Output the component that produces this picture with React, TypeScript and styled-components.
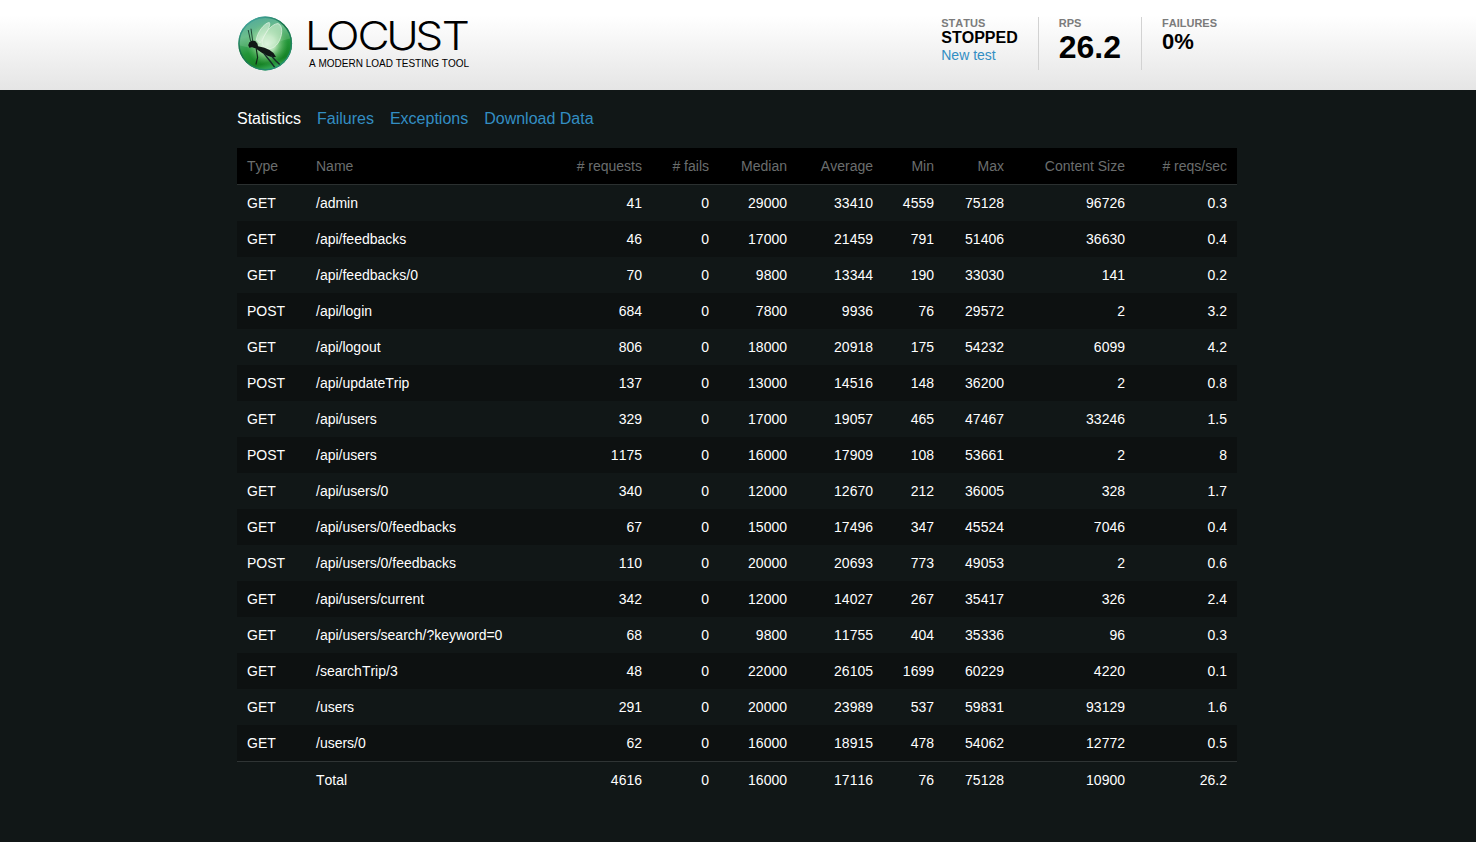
import React from "react";
import styled, { createGlobalStyle } from "styled-components";

const GlobalStyle = createGlobalStyle`
  * { box-sizing: border-box; }
  body {
    margin: 0;
    min-height: 100vh;
    background: #111717;
    color: #fff;
    font-family: "Liberation Sans", Arial, Helvetica, sans-serif;
    font-size: 14px;
    font-kerning: none;
  }
`;

const TopBar = styled.header`
  height: 90px;
  background: linear-gradient(#ffffff 0%, #ffffff 17%, #e5e5e5 100%);
`;

const Container = styled.div`
  width: 1002px;
  margin: 0 auto;
  padding-right: 2px;
`;

const TopContent = styled(Container)`
  display: flex;
  justify-content: space-between;
`;

const Logo = styled.svg`
  display: block;
  width: 240px;
  height: 80px;
`;

const Stats = styled.div`
  display: flex;
  height: 53px;
  margin-top: 17px;
`;

const StatBox = styled.div`
  padding: 0 20px;
  color: #000;
  border-right: 1px solid #d2d2d2;
  &:last-child { border-right: 0; }
`;

const StatLabel = styled.div`
  font-size: 11px;
  font-weight: bold;
  line-height: 13px;
  color: #7b7b7b;
`;

const StatValue = styled.div<{ $size: number; $line: number }>`
  font-size: ${(p) => p.$size}px;
  line-height: ${(p) => p.$line}px;
  font-weight: bold;
`;

const NewTest = styled.a`
  display: block;
  line-height: 18px;
  color: #338ec3;
`;

const Tabs = styled.nav`
  display: flex;
  gap: 16px;
  padding: 19px 0 20px;
  font-size: 16px;
  line-height: 19px;
`;

const Tab = styled.a<{ $active?: boolean }>`
  color: ${(p) => (p.$active ? "#fff" : "#338ec3")};
`;

const Table = styled.table`
  width: 1000px;
  table-layout: fixed;
  border-collapse: separate;
  border-spacing: 0;
`;

const HeadCell = styled.th<{ $left?: boolean }>`
  height: 37px;
  padding: 0 10px;
  background: #000;
  border-bottom: 1px solid #2b3030;
  color: #6b6e6e;
  font-weight: normal;
  text-align: ${(p) => (p.$left ? "left" : "right")};
`;

const Row = styled.tr<{ $dark?: boolean }>`
  background: ${(p) => (p.$dark ? "#0d1111" : "transparent")};
`;

const Cell = styled.td<{ $left?: boolean; $total?: boolean }>`
  height: ${(p) => (p.$total ? 37 : 36)}px;
  padding: 0 10px;
  border-top: ${(p) => (p.$total ? "1px solid #2f3434" : "0")};
  text-align: ${(p) => (p.$left ? "left" : "right")};
`;

const widths = [69, 240, 106, 67, 78, 86, 61, 70, 121, 102];
const columns = ["Type", "Name", "# requests", "# fails", "Median", "Average", "Min", "Max", "Content Size", "# reqs/sec"];
const rows = [
  ["GET", "/admin", 41, 0, 29000, 33410, 4559, 75128, 96726, 0.3],
  ["GET", "/api/feedbacks", 46, 0, 17000, 21459, 791, 51406, 36630, 0.4],
  ["GET", "/api/feedbacks/0", 70, 0, 9800, 13344, 190, 33030, 141, 0.2],
  ["POST", "/api/login", 684, 0, 7800, 9936, 76, 29572, 2, 3.2],
  ["GET", "/api/logout", 806, 0, 18000, 20918, 175, 54232, 6099, 4.2],
  ["POST", "/api/updateTrip", 137, 0, 13000, 14516, 148, 36200, 2, 0.8],
  ["GET", "/api/users", 329, 0, 17000, 19057, 465, 47467, 33246, 1.5],
  ["POST", "/api/users", 1175, 0, 16000, 17909, 108, 53661, 2, 8],
  ["GET", "/api/users/0", 340, 0, 12000, 12670, 212, 36005, 328, 1.7],
  ["GET", "/api/users/0/feedbacks", 67, 0, 15000, 17496, 347, 45524, 7046, 0.4],
  ["POST", "/api/users/0/feedbacks", 110, 0, 20000, 20693, 773, 49053, 2, 0.6],
  ["GET", "/api/users/current", 342, 0, 12000, 14027, 267, 35417, 326, 2.4],
  ["GET", "/api/users/search/?keyword=0", 68, 0, 9800, 11755, 404, 35336, 96, 0.3],
  ["GET", "/searchTrip/3", 48, 0, 22000, 26105, 1699, 60229, 4220, 0.1],
  ["GET", "/users", 291, 0, 20000, 23989, 537, 59831, 93129, 1.6],
  ["GET", "/users/0", 62, 0, 16000, 18915, 478, 54062, 12772, 0.5],
];
const total = ["", "Total", 4616, 0, 16000, 17116, 76, 75128, 10900, 26.2];

const wordmarkStretch = 1.12;
const wordmarkX = [67.9, 89.1, 120.5, 149.3, 178.2, 204.8]
  .map((x) => (x / wordmarkStretch).toFixed(2))
  .join(" ");

function LocustLogo() {
  return (
    <Logo viewBox="0 0 240 80">
      <defs>
        <linearGradient id="ball" x1="0.3" y1="0" x2="0.6" y2="1">
          <stop offset="0" stopColor="#3b9f8d" />
          <stop offset="0.3" stopColor="#58b57c" />
          <stop offset="0.6" stopColor="#239538" />
          <stop offset="0.85" stopColor="#178326" />
          <stop offset="1" stopColor="#3fb565" />
        </linearGradient>
        <radialGradient id="glow" cx="0.5" cy="0.5" r="0.5">
          <stop offset="0" stopColor="#f4fdf2" />
          <stop offset="0.4" stopColor="#c9edc7" stopOpacity="0.85" />
          <stop offset="1" stopColor="#5fbe62" stopOpacity="0" />
        </radialGradient>
        <linearGradient id="rim" x1="0" y1="0" x2="0.6" y2="1">
          <stop offset="0" stopColor="#52b7bb" />
          <stop offset="0.5" stopColor="#176f47" />
          <stop offset="1" stopColor="#268e73" />
        </linearGradient>
        <clipPath id="disc"><circle cx="28.2" cy="43.5" r="26.7" /></clipPath>
      </defs>
      <circle cx="28.2" cy="43.5" r="26.9" fill="url(#ball)" />
      <g clipPath="url(#disc)">
        <circle cx="30" cy="44" r="21" fill="url(#glow)" />
        <path d="M1 45C13 48 22 50 31 46C41 42 48 39 56 38V17H1Z" fill="#fff" opacity="0.12" />
        <path d="M19.3 40C20 33 27 23 32.3 22.5C34.5 25 29 33 25 40L23 43Z" fill="#d9f2da" fillOpacity="0.6" stroke="#e6f5e7" strokeWidth="0.7" />
        <path d="M25 43C26 35 34 24 41 23.5C46.5 26 45.5 36 41 43C37 49 31 50 27 47Z" fill="#cdeccf" fillOpacity="0.6" stroke="#e6f5e7" strokeWidth="0.7" />
        <path d="M11.2 45.2L12.3 42.2L15 40.6L18.2 41L20.5 43.7L21 46.3L27.5 47.8L32.5 50L36.5 53L39 57L35.5 57.2L31 56L25.5 53.3L21.5 50.6L18.8 48.6L15 47.2L12.3 47.8Z" fill="#111816" />
        <path d="M13.7 41.5L11.2 30M15.7 41L14 28.7" fill="none" stroke="#173a2b" strokeWidth="0.9" />
        <path d="M19.2 48.5L20.6 57.5L18.9 64.5" fill="none" stroke="#102719" strokeWidth="1.2" />
        <path d="M27 53.5L33 61L38.5 68.3M34 55.5L39 61L43.5 65.3" fill="none" stroke="#152c29" strokeWidth="1.4" />
      </g>
      <circle cx="28.2" cy="43.5" r="26.2" fill="none" stroke="url(#rim)" strokeWidth="1.4" />
      <text transform={`scale(${wordmarkStretch} 1)`} x={wordmarkX} y="50.2" fontFamily="Inter, sans-serif" fontWeight="300" fontSize="39.5">LOCUST</text>
      <text x="72" y="67" fontFamily='"Liberation Sans", Arial, sans-serif' fontSize="10.4" textLength="160" lengthAdjust="spacingAndGlyphs">A MODERN LOAD TESTING TOOL</text>
    </Logo>
  );
}

const format = (value: string | number) => String(value);

export default function App() {
  return (
    <>
      <GlobalStyle />
      <TopBar>
        <TopContent>
          <LocustLogo />
          <Stats>
            <StatBox>
              <StatLabel>STATUS</StatLabel>
              <StatValue $size={16} $line={16}>STOPPED</StatValue>
              <NewTest>New test</NewTest>
            </StatBox>
            <StatBox>
              <StatLabel>RPS</StatLabel>
              <StatValue $size={32} $line={34}>26.2</StatValue>
            </StatBox>
            <StatBox>
              <StatLabel>FAILURES</StatLabel>
              <StatValue $size={22} $line={24}>0%</StatValue>
            </StatBox>
          </Stats>
        </TopContent>
      </TopBar>
      <Container>
        <Tabs>
          <Tab $active>Statistics</Tab>
          <Tab>Failures</Tab>
          <Tab>Exceptions</Tab>
          <Tab>Download Data</Tab>
        </Tabs>
        <Table>
          <colgroup>{widths.map((w, i) => <col key={i} width={w} />)}</colgroup>
          <thead>
            <tr>{columns.map((c, i) => <HeadCell key={c} $left={i < 2}>{c}</HeadCell>)}</tr>
          </thead>
          <tbody>
            {rows.map((row, r) => (
              <Row key={r} $dark={r % 2 === 1}>
                {row.map((v, i) => <Cell key={i} $left={i < 2}>{format(v)}</Cell>)}
              </Row>
            ))}
            <Row>
              {total.map((v, i) => <Cell key={i} $left={i < 2} $total>{format(v)}</Cell>)}
            </Row>
          </tbody>
        </Table>
      </Container>
    </>
  );
}
